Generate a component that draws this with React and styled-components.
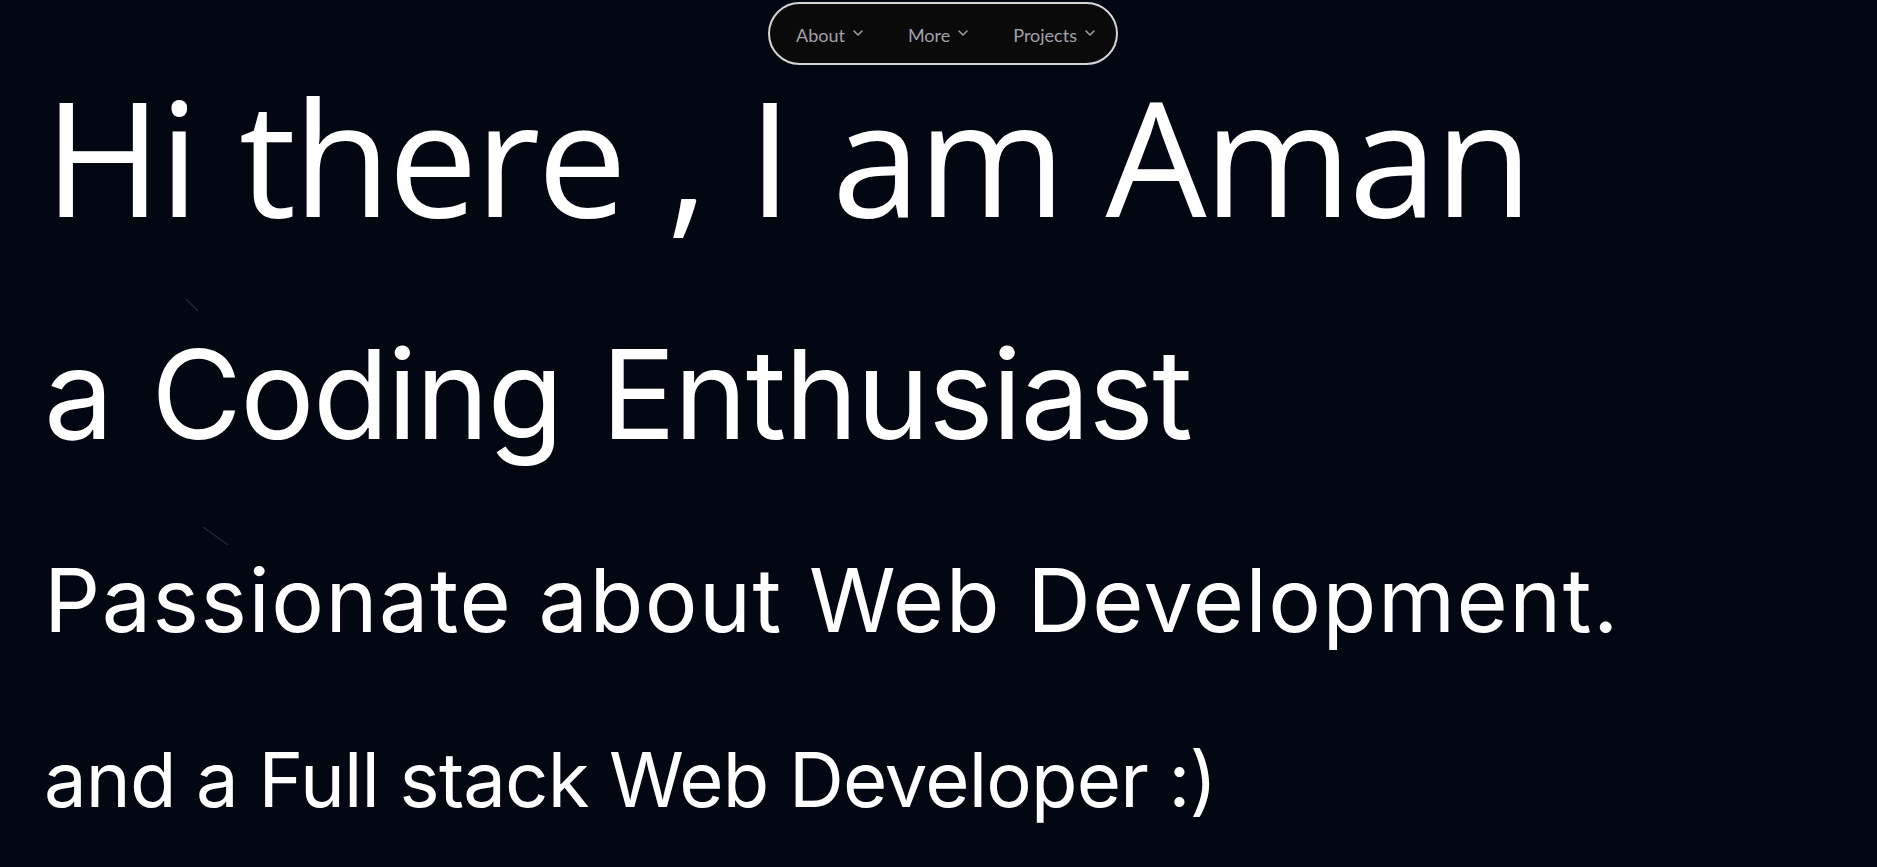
import React from "react";
import styled, { createGlobalStyle } from "styled-components";

const GlobalStyle = createGlobalStyle`
  html, body {
    margin: 0;
    padding: 0;
    background-color: #030712;
  }
  body {
    font-family: "Open Sans", "Noto Sans", sans-serif;
    color: #ffffff;
    overflow: hidden;
  }
`;

const Page = styled.div`
  position: relative;
  min-height: 867px;
  background-color: #030712;
  overflow: hidden;
`;

const Stars = styled.svg`
  position: absolute;
  inset: 0;
  width: 100%;
  height: 100%;
  pointer-events: none;
`;

const NavWrap = styled.div`
  display: flex;
  justify-content: center;
  padding: 2px 0 0 9px;
`;

const NavPill = styled.nav`
  display: flex;
  align-items: center;
  gap: 45px;
  width: 350px;
  height: 63px;
  box-sizing: border-box;
  padding: 2px 0 0 26px;
  border: 2px solid #d4d4d4;
  border-radius: 32px;
  background-color: #0a0a0a;
`;

const NavItem = styled.button`
  display: flex;
  align-items: center;
  gap: 8px;
  background: none;
  border: none;
  padding: 0;
  color: #a1a1aa;
  font-family: "Lato", "Open Sans", sans-serif;
  font-size: 18px;
  cursor: pointer;

  svg {
    margin-top: -3px;
  }
`;

const Hero = styled.main`
  position: relative;
  display: flex;
  flex-direction: column;
  padding-left: 44px;
`;

const Line = styled.h1`
  margin: ${(p) => p.$mt}px 0 0;
  font-family: ${(p) => p.$font};
  font-size: ${(p) => p.$size}px;
  line-height: ${(p) => p.$size}px;
  letter-spacing: ${(p) => p.$ls}px;
  word-spacing: ${(p) => p.$ws}px;
  font-weight: 400;
  color: #ffffff;
  white-space: nowrap;
`;

const lines = [
  { text: "Hi there , I am Aman", font: '"Open Sans", sans-serif', size: 160, ls: -3, ws: 4, mt: 10 },
  { text: "a Coding Enthusiast", font: '"Inter", sans-serif', size: 124, ls: -1.6, ws: 6, mt: 97 },
  { text: "Passionate about Web Development.", font: '"Inter", sans-serif', size: 88, ls: 1.5, ws: 0, mt: 100 },
  { text: "and a Full stack Web Developer :)", font: '"Inter", sans-serif', size: 76, ls: -0.85, ws: 0, mt: 97 },
];

const navItems = ["About", "More", "Projects"];

const Chevron = () => (
  <svg width="10" height="6" viewBox="0 0 10 6" fill="none">
    <polyline points="1,1 5,5 9,1" stroke="currentColor" strokeWidth="1.5" strokeLinecap="round" strokeLinejoin="round" />
  </svg>
);

export default function App() {
  return (
    <Page>
      <GlobalStyle />
      <Stars viewBox="0 0 1877 867" preserveAspectRatio="none">
        <line x1="186" y1="299" x2="198" y2="311" stroke="#1f2937" strokeWidth="1.5" />
        <line x1="203" y1="527" x2="228" y2="545" stroke="#1f2937" strokeWidth="1.5" />
      </Stars>
      <NavWrap>
        <NavPill>
          {navItems.map((item) => (
            <NavItem key={item}>
              {item}
              <Chevron />
            </NavItem>
          ))}
        </NavPill>
      </NavWrap>
      <Hero>
        {lines.map((l) => (
          <Line key={l.text} $font={l.font} $size={l.size} $ls={l.ls} $ws={l.ws} $mt={l.mt}>
            {l.text}
          </Line>
        ))}
      </Hero>
    </Page>
  );
}
